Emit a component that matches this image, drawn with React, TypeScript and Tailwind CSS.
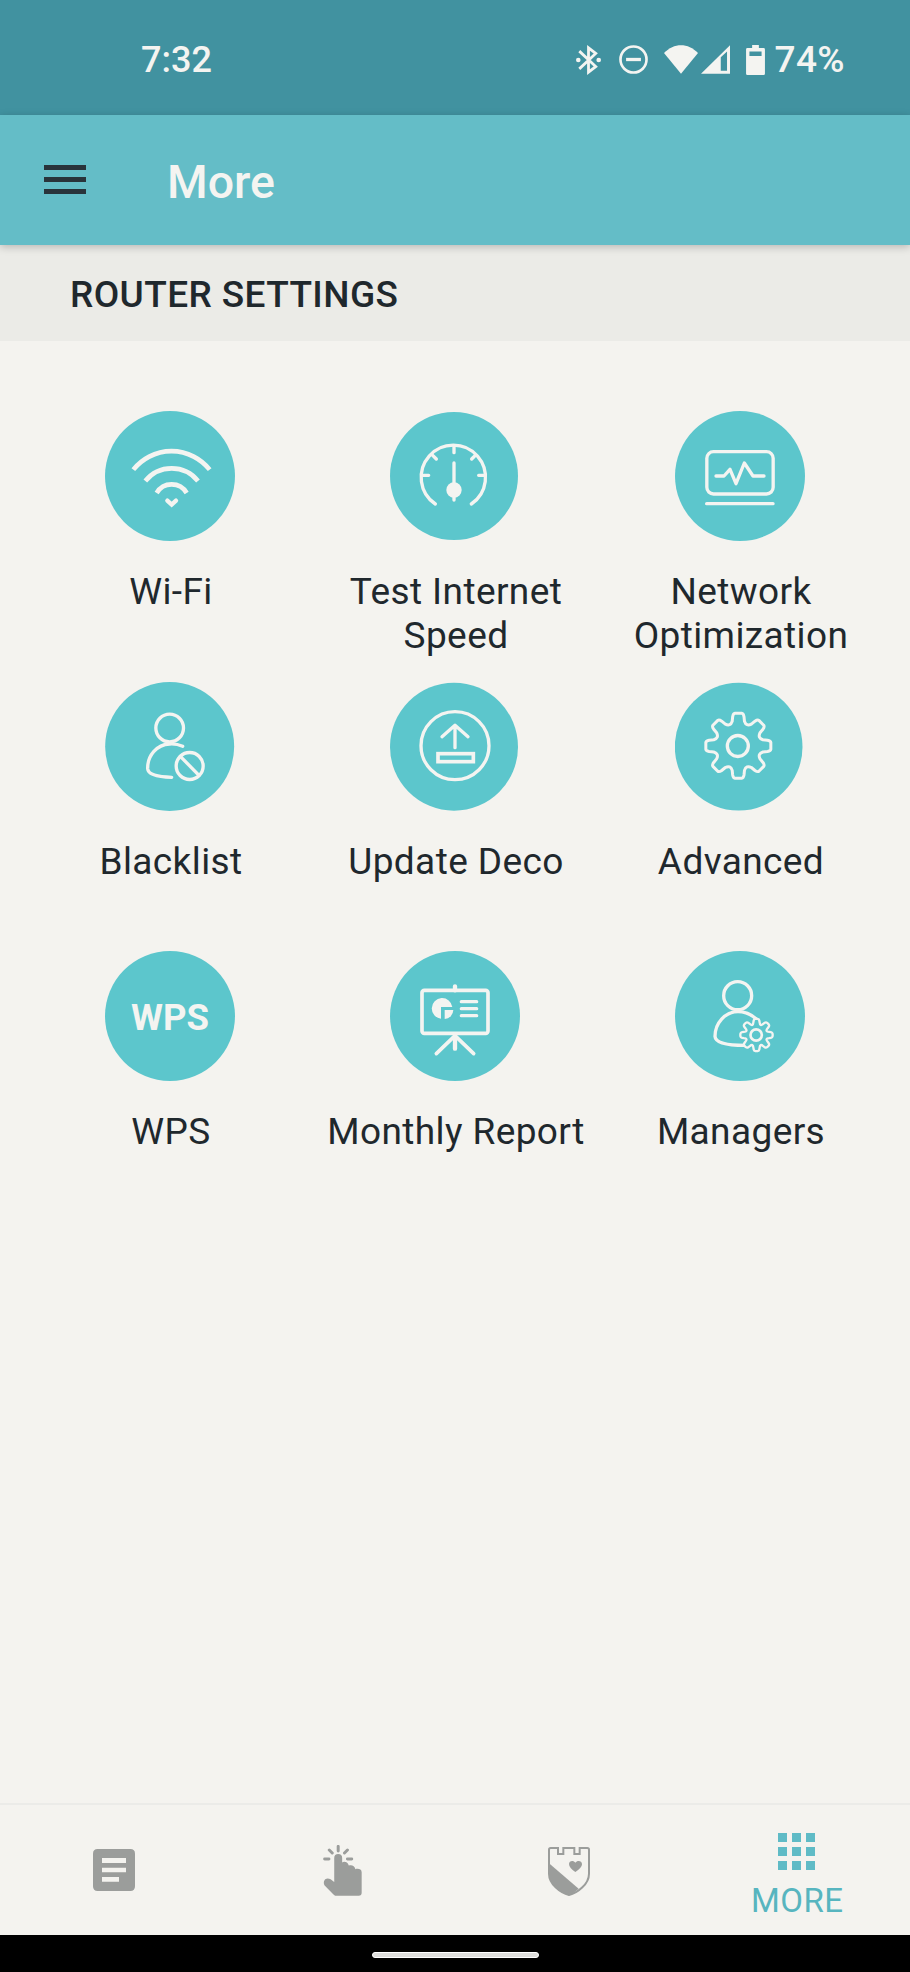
import React from 'react';

const INK = '#f4f4f1';
const TEAL = '#5cc6cc';

// Outline of an 8-tooth cog centred on cx, cy
const gearPath = (cx: number, cy: number, outer: number, base: number, valley: number, tip = 6) => {
  const point = (angle: number, radius: number) => {
    const rad = (angle * Math.PI) / 180;
    return `${(cx + radius * Math.sin(rad)).toFixed(1)} ${(cy - radius * Math.cos(rad)).toFixed(1)}`;
  };
  let d = '';
  for (let i = 0; i < 8; i++) {
    const a = i * 45;
    d += `${i === 0 ? 'M' : 'L'}${point(a - 11, outer * 0.91)} Q${point(a - 9, outer)} ${point(a - tip, outer)} `;
    d += `L${point(a + tip, outer)} Q${point(a + 9, outer)} ${point(a + 11, outer * 0.91)} `;
    d += `L${point(a + 14, base)} Q${point(a + 22.5, valley)} ${point(a + 31, base)} `;
  }
  return d + 'Z';
};

interface RoundIconProps {
  cx?: number;
  cy?: number;
  r?: number;
  children?: React.ReactNode;
}

const RoundIcon: React.FC<RoundIconProps> = ({ cx = 195, cy = 195, r = 195, children }) => (
  <svg
    viewBox="0 0 390 390"
    className="block h-[130px] w-[130px]"
    fill="none"
    stroke={INK}
    strokeWidth={10}
    strokeLinecap="round"
    strokeLinejoin="round"
  >
    <circle cx={cx} cy={cy} r={r} fill={TEAL} stroke="none" />
    {children}
  </svg>
);

const WifiIcon = () => (
  <RoundIcon>
    <g strokeWidth={14} strokeLinecap="butt">
      <path d="M85 176A146 146 0 0 1 314 176" />
      <path d="M121 210A101 101 0 0 1 279 210" />
      <path d="M155 246A52 52 0 0 1 245 246" />
    </g>
    <path d="M187 269L200 281L213 269" strokeWidth={13} strokeLinejoin="miter" />
  </RoundIcon>
);

const SpeedIcon = () => (
  <RoundIcon cx={192} cy={195} r={192}>
    <path d="M136 279A96.5 96.5 0 1 1 244 279" />
    <path d="M98 193H116M266 193H284M192 107V125M128 133L139 144M256 133L245 144M192 156V267" />
    <circle cx="192" cy="237" r="23" fill={INK} stroke="none" />
  </RoundIcon>
);

const NetworkIcon = () => (
  <RoundIcon>
    <rect x="95.500" y="122" width="199" height="127" rx="20" />
    <path d="M95 278H294" />
    <path d="M123 195H147L165 175L183 218L208 156L234 195H267" />
  </RoundIcon>
);

const BlacklistIcon = () => (
  <RoundIcon cx={194} cy={196.5} r={193.5}>
    <circle cx="194" cy="141" r="41.500" />
    <path d="M233 196C222 191 208 188 194 189C155 190 127 225 128 263C129 281 160 288 200 289" />
    <circle cx="254" cy="255" r="40.500" />
    <path d="M226 226L282 283" />
  </RoundIcon>
);

const UpdateIcon = () => (
  <RoundIcon cx={192} cy={197} r={192}>
    <circle cx="195" cy="194" r="102" />
    <path d="M156 167L195 133L234 167M195 135V200" />
    <rect x="144" y="218" width="106" height="24" strokeWidth={11} strokeLinejoin="miter" />
  </RoundIcon>
);

const AdvancedIcon = () => (
  <RoundIcon cx={191} cy={197} r={191.5}>
    <path d={gearPath(190, 194.5, 98, 76, 62)} strokeWidth={9} />
    <circle cx="188.500" cy="195" r="31.500" />
  </RoundIcon>
);

const ReportIcon = () => (
  <RoundIcon>
    <rect x="96" y="118" width="198" height="129" rx="7" strokeWidth={11} />
    <path d="M195 106V118M195 257V293" strokeWidth={13} />
    <path d="M192 257L139 308M198 257L251 308" strokeWidth={11} />
    <path d="M214 152H260M214 173H260M214 194H260" strokeWidth={10} />
    <g fill={INK} stroke="none">
      <path d="M153 168H187A31 31 0 1 0 153 203Z" />
      <path d="M164 177H190A28 28 0 0 1 164 204Z" />
    </g>
  </RoundIcon>
);

const ManagersIcon = () => (
  <RoundIcon>
    <circle cx="188" cy="134" r="42" />
    <path d="M243 203C228 190 208 182 189 182C150 182 120 217 120 256C121 274 150 283 210 283" />
    <path d={gearPath(244.5, 252, 48.5, 39, 27, 4)} fill={TEAL} strokeWidth={7} />
    <circle cx="243.500" cy="252" r="17" strokeWidth={8} />
  </RoundIcon>
);

const WpsIcon = () => (
  <div className="flex h-[130px] w-[130px] items-center justify-center rounded-full bg-[#5cc6cc] pt-[5px] text-[36.5px] font-bold text-[#f4f4f1]">
    WPS
  </div>
);

const settings = [
  { label: 'Wi-Fi', icon: <WifiIcon /> },
  { label: 'Test Internet Speed', icon: <SpeedIcon /> },
  { label: 'Network Optimization', icon: <NetworkIcon /> },
  { label: 'Blacklist', icon: <BlacklistIcon /> },
  { label: 'Update Deco', icon: <UpdateIcon /> },
  { label: 'Advanced', icon: <AdvancedIcon /> },
  { label: 'WPS', icon: <WpsIcon /> },
  { label: 'Monthly Report', icon: <ReportIcon /> },
  { label: 'Managers', icon: <ManagersIcon /> },
];

const StatusBar = () => (
  <div className="flex h-[115px] items-center justify-between bg-[#4192a0] pt-1 pr-[65px] pl-[141px] text-[#f4f4f1]">
    <span className="pt-px text-[36px] font-medium">7:32</span>
    <div className="flex items-center">
      <svg viewBox="0 0 76 90" className="h-[30px] w-[25px]" fill="none" stroke="currentColor" strokeWidth="8.500">
        <path d="M10 18L60 65L38 82V8L60 25L10 72" />
        <circle cx="7" cy="45" r="7" fill="currentColor" stroke="none" />
        <circle cx="69" cy="45" r="7" fill="currentColor" stroke="none" />
      </svg>
      <svg viewBox="0 0 87 88" className="ml-[18px] h-[29px] w-[29px]" fill="none" stroke="currentColor">
        <circle cx="43.500" cy="44" r="39.500" strokeWidth="8" />
        <path d="M21 44H66" strokeWidth="10" />
      </svg>
      <svg viewBox="0 0 103 87" className="ml-[16px] h-[29px] w-[34px]" fill="currentColor">
        <path d="M0 24C30 -8 73 -8 103 24L51.500 87Z" />
      </svg>
      <svg viewBox="0 0 88 87" className="ml-[3px] h-[29px] w-[29px]" fill="currentColor" fillRule="evenodd">
        <path d="M0 87L88 0V87ZM60 37L79 19V78H60Z" />
      </svg>
      <svg viewBox="0 0 56 89" className="ml-[16px] h-[30px] w-[19px]" fill="currentColor" fillRule="evenodd">
        <path d="M18 0H38V9H52Q56 9 56 13V85Q56 89 52 89H4Q0 89 0 85V13Q0 9 4 9H18ZM10 19V33H46V19Z" />
      </svg>
      <span className="ml-[9px] pt-px text-[37px] font-medium tracking-[0.4px]">74%</span>
    </div>
  </div>
);

const Header = () => (
  <header className="relative flex h-[130px] items-center bg-[#64bdc7] pl-[44px] shadow-[0_2px_8px_rgba(0,0,0,0.22)]">
    <button className="mb-[2px] flex w-[42px] flex-col gap-[7px]">
      <span className="h-[5px] bg-[#29343b]" />
      <span className="h-[5px] bg-[#29343b]" />
      <span className="h-[5px] bg-[#29343b]" />
    </button>
    <h1 className="ml-[81px] pt-[5px] text-[46.5px] font-medium text-[#f4f4f1]">More</h1>
  </header>
);

const BottomNav = () => (
  <nav className="grid h-[132px] grid-cols-4 border-t-2 border-[#ebebe8] text-[#9b9d9b]">
    <button className="flex items-center justify-center">
      <svg viewBox="0 0 126 126" className="h-[42px] w-[42px]" fill="currentColor" fillRule="evenodd">
        <path d="M14 0H112Q126 0 126 14V112Q126 126 112 126H14Q0 126 0 112V14Q0 0 14 0ZM27 27V42H99V27ZM27 56V70H99V56ZM27 84V98H78V84Z" />
      </svg>
    </button>
    <button className="flex items-center justify-center">
      <svg viewBox="-7 0 124 154" className="h-[51px] w-[41px]" fill="currentColor">
        <path
          d="M45 4V18M4 42H17M73 42H86M18 15L27 24M73 15L64 24"
          stroke="currentColor"
          strokeWidth="9"
          strokeLinecap="round"
        />
        <path d="M33 39a12 12 0 0 1 24 0v14C61 49 74 50 77 62C84 59 95 61 97 73C104 70 116 72 116 82V144Q116 153 107 153H36Q34 153 30 149L4 122C-2 112 4 101 13 101C20 101 24 104 33 112Z" />
      </svg>
    </button>
    <button className="flex items-center justify-center pt-[2px]">
      <svg viewBox="0 0 126 147" className="h-[49px] w-[42px]" fill="none" stroke="currentColor" strokeWidth="6">
        <path d="M8 3H30V21H46V3H79V21H95V3H118Q123 3 123 8V80C123 112 88 138 63 144C38 138 3 112 3 80V8Q3 3 8 3Z" />
        <path d="M3 49L92 125C82 134 72 141 63 144C38 138 3 112 3 80Z" fill="currentColor" stroke="none" />
        <path
          d="M82 75C70 66 63 60 63 51C63 41 76 38 82 47C88 38 102 41 102 51C102 60 94 66 82 75Z"
          fill="currentColor"
          stroke="none"
        />
      </svg>
    </button>
    <button className="flex flex-col items-center pt-[28px] text-[#57b5bf]">
      <span className="grid grid-cols-3 gap-[5px]">
        {Array.from({ length: 9 }, (_, i) => (
          <span key={i} className="h-[9px] w-[9px] bg-[#5fbbc6]" />
        ))}
      </span>
      <span className="mt-[11px] pl-[2px] text-[33px] leading-[40px] tracking-[0.5px]">MORE</span>
    </button>
  </nav>
);

export default function App() {
  return (
    <div className="flex h-[1972px] w-[910px] flex-col overflow-hidden bg-[#f4f3ef] font-['Roboto',sans-serif] text-[#1f282d]">
      <StatusBar />
      <Header />
      <h2 className="flex h-[96px] items-center bg-[#ebebe7] pt-[4px] pl-[70px] text-[37px] font-medium tracking-[0.4px]">
        ROUTER SETTINGS
      </h2>
      <main className="grid flex-1 auto-rows-[270px] grid-cols-3 px-[27.5px] pt-[70px]">
        {settings.map(({ label, icon }) => (
          <button key={label} className="flex flex-col items-center">
            {icon}
            <span className="mt-[28.5px] max-w-[270px] pl-[2px] text-[37px] leading-[44px] tracking-[0.4px]">
              {label}
            </span>
          </button>
        ))}
      </main>
      <BottomNav />
      <footer className="flex h-[37px] items-center justify-center bg-black pt-[3px]">
        <div className="h-[6px] w-[167px] rounded-full border border-white bg-[#dededc]" />
      </footer>
    </div>
  );
}
